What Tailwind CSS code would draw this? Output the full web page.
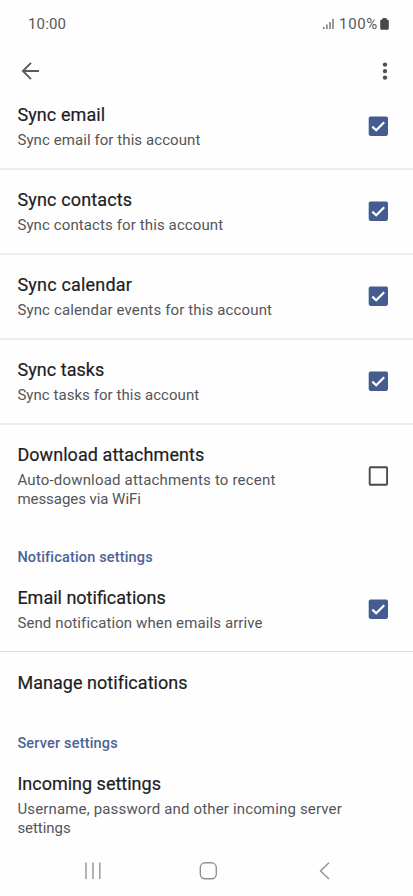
<!DOCTYPE html>
<html lang="en">
<head>
<meta charset="utf-8">
<meta name="viewport" content="width=device-width, initial-scale=1">
<title>Account settings</title>
<script src="https://cdn.jsdelivr.net/npm/@tailwindcss/browser@4"></script>
</head>
<body class="bg-[#fefefe] font-['Roboto',sans-serif]">
<svg class="hidden">
  <symbol id="checked" viewBox="0 0 20 20">
    <rect x="0.7" y="0.4" width="19.3" height="19.500" rx="1.800" fill="#445c90"/>
    <path d="M4.300 10.600 8.200 14.300 16.200 6.200" fill="none" stroke="#fff" stroke-width="2.200"/>
  </symbol>
</svg>
<div class="flex h-[896px] w-[413px] flex-col overflow-hidden">
  <header class="shrink-0">
    <div class="flex h-12 items-center justify-between pl-7 pr-6 text-[15px] text-[#585858]">
      <span class="tracking-[0.15px]">10:00</span>
      <div class="flex items-center">
        <svg class="mr-[5px] h-3 w-[11px]" viewBox="0 0 11 12" fill="none" stroke="#585858" stroke-width="1.2"><path d="M.8 9V11M3.900 6.500V11M7 4V11M10 .8V11"/></svg>
        <span class="mr-[2px] tracking-[0.65px]">100%</span>
        <svg class="h-3 w-[9px]" viewBox="0 0 9 12" fill="#484848"><path d="M2.500 1.400V.1h4v1.300h.8Q8.800 1.400 8.800 3v7.200q0 1.600-1.500 1.600H1.700Q.2 11.800.2 10.200V3Q.2 1.400 1.700 1.400Z"/></svg>
      </div>
    </div>
    <div class="flex h-[47px] items-center justify-between pb-px pl-[21px] pr-[25px]">
      <svg class="h-[18px] w-[19px]" viewBox="0 0 19 18" fill="none" stroke="#5a5a5a" stroke-width="1.9"><path d="M18 9H2M10 .9 1.900 9 10 17.100"/></svg>
      <svg class="h-5 w-[6px]" viewBox="0 0 6 20" fill="#505050"><circle cx="3" cy="3.600" r="2.200"/><circle cx="3" cy="10.100" r="2.200"/><circle cx="3" cy="16.600" r="2.200"/></svg>
    </div>
  </header>

  <main class="flex-1 text-[15px] leading-[19px] text-[#54555a]">
    <section class="flex h-[75px] justify-between border-b-2 border-[#ececec] pl-[17.400px] pr-[25px] pt-[8.400px]">
      <div>
        <h2 class="mb-1 text-[18px] leading-6 tracking-[0.1px] text-[#1d1d1f] [-webkit-text-stroke:0.2px]">Sync email</h2>
        <p class="tracking-[0.08px]">Sync email for this account</p>
      </div>
      <svg class="mt-[13px] size-5"><use href="#checked"/></svg>
    </section>
    <section class="flex h-[85px] justify-between border-b-2 border-[#ececec] pl-[17.400px] pr-[25px] pt-[18.400px]">
      <div>
        <h2 class="mb-1 text-[18px] leading-6 tracking-[0.15px] text-[#1d1d1f] [-webkit-text-stroke:0.2px]">Sync contacts</h2>
        <p class="tracking-[0.11px]">Sync contacts for this account</p>
      </div>
      <svg class="mt-[13px] size-5"><use href="#checked"/></svg>
    </section>
    <section class="flex h-[85px] justify-between border-b-2 border-[#ececec] pl-[17.400px] pr-[25px] pt-[18.400px]">
      <div>
        <h2 class="mb-1 text-[18px] leading-6 tracking-[0.2px] text-[#1d1d1f] [-webkit-text-stroke:0.2px]">Sync calendar</h2>
        <p class="tracking-[0.14px]">Sync calendar events for this account</p>
      </div>
      <svg class="mt-[13px] size-5"><use href="#checked"/></svg>
    </section>
    <section class="flex h-[85px] justify-between border-b-2 border-[#ececec] pl-[17.400px] pr-[25px] pt-[18.400px]">
      <div>
        <h2 class="mb-1 text-[18px] leading-6 tracking-[0.06px] text-[#1d1d1f] [-webkit-text-stroke:0.2px]">Sync tasks</h2>
        <p class="tracking-[0.05px]">Sync tasks for this account</p>
      </div>
      <svg class="mt-[13px] size-5"><use href="#checked"/></svg>
    </section>
    <section class="flex h-[104px] justify-between pl-[17.400px] pr-[25px] pt-[18.400px]">
      <div class="w-[290px]">
        <h2 class="mb-1 text-[18px] leading-6 tracking-[0.06px] text-[#1d1d1f] [-webkit-text-stroke:0.2px]">Download attachments</h2>
        <p class="tracking-[0.19px]">Auto-download attachments to recent<br><span class="tracking-[-0.05px]">messages via WiFi</span></p>
      </div>
      <svg class="mt-[23px] size-5" viewBox="0 0 20 20"><rect x="1.700" y="1.300" width="17.400" height="17.500" rx="1" fill="none" stroke="#484952" stroke-width="1.900"/></svg>
    </section>

    <h3 class="flex h-[38px] items-end pl-[17.400px] text-[14.5px] font-medium tracking-[0.16px] text-[#4c6394]">Notification settings</h3>
    <section class="flex h-[85px] justify-between border-b border-[#dcdce0] pl-[17.400px] pr-[25px] pt-[19px]">
      <div>
        <h2 class="mb-1 text-[18px] leading-6 text-[#1d1d1f] [-webkit-text-stroke:0.2px]">Email notifications</h2>
        <p class="tracking-[0.11px]">Send notification when emails arrive</p>
      </div>
      <svg class="mt-[12.800px] size-5"><use href="#checked"/></svg>
    </section>
    <section class="h-[63px] pl-[17.400px] pt-[19px]">
      <h2 class="text-[18px] leading-6 tracking-[0.04px] text-[#1d1d1f] [-webkit-text-stroke:0.2px]">Manage notifications</h2>
    </section>

    <h3 class="flex h-[38px] items-end pl-[17.400px] text-[14.5px] font-medium tracking-[0.18px] text-[#4c6394]">Server settings</h3>
    <section class="pl-[17.400px] pt-[19px]">
      <h2 class="mb-1 text-[18px] leading-6 text-[#1d1d1f] [-webkit-text-stroke:0.2px]">Incoming settings</h2>
      <p class="tracking-[0.16px]">Username, password and other incoming server<br><span class="tracking-[-0.05px]">settings</span></p>
    </section>
  </main>

  <nav class="flex h-[50px] shrink-0 items-center pl-[84px]" aria-label="System">
    <svg class="h-[18px] w-[18px]" viewBox="0 0 18 18" stroke="#929292" stroke-width="1.4"><path d="M2 .5V17M9 .5V17M15.800 .5V17"/></svg>
    <svg class="ml-[97px] size-[18px]" viewBox="0 0 18 18" fill="none" stroke="#929292" stroke-width="1.400"><rect x="1.300" y=".8" width="16" height="16" rx="4.800"/></svg>
    <svg class="ml-[102px] h-[18px] w-[11px]" viewBox="0 0 11 18" fill="none" stroke="#929292" stroke-width="1.400"><path d="M10 .7 1.500 9 10 17"/></svg>
  </nav>
</div>
</body>
</html>
